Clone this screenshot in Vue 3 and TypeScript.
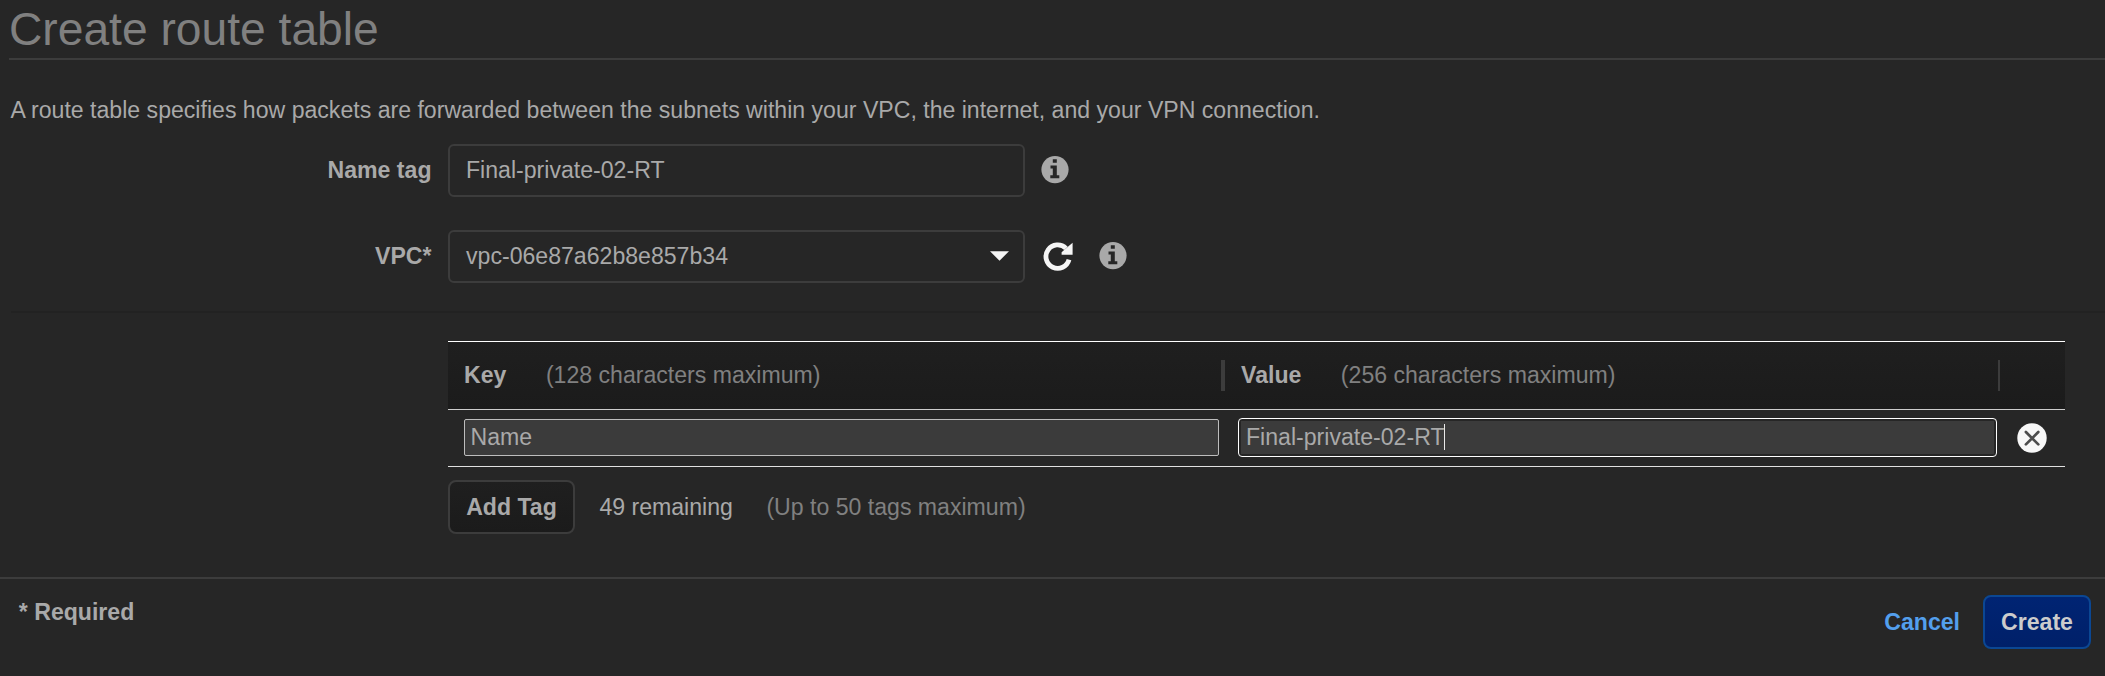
<script setup lang="ts">
import { ref } from 'vue'

interface Tag {
  key: string
  value: string
}

const MAX_TAGS = 50
const nameTag = ref('Final-private-02-RT')
const vpcId = ref('vpc-06e87a62b8e857b34')
const tags = ref<Tag[]>([{ key: 'Name', value: 'Final-private-02-RT' }])

function addTag(): void {
  if (tags.value.length < MAX_TAGS) tags.value.push({ key: '', value: '' })
}
function removeTag(index: number): void {
  tags.value.splice(index, 1)
}
</script>

<template>
  <main class="page">
    <h1 class="title">Create route table</h1>
    <p class="description">
      A route table specifies how packets are forwarded between the subnets within your VPC, the internet, and your VPN connection.
    </p>

    <div class="row">
      <label class="label">Name tag</label>
      <input v-model="nameTag" class="field" type="text" spellcheck="false" />
      <svg class="info first" viewBox="0 0 28 28">
        <circle cx="14" cy="13.6" r="13.6" fill="#a9a9a9" />
        <path d="M11.8 3.2h4v3.6h-4zM9.5 9.6h6.3v9.6h2.5v3H9.3v-3h2.5v-6.6H9.5z" fill="#262626" />
      </svg>
    </div>

    <div class="row vpc">
      <label class="label">VPC*</label>
      <button class="field select" type="button">
        <span>{{ vpcId }}</span>
        <svg class="arrow" viewBox="0 0 20 10"><path d="M0 0h20L10 10z" fill="#f5f5f5" /></svg>
      </button>
      <svg class="refresh" viewBox="0 0 30 30">
        <path d="M26 17.6A11.7 11.7 0 1 1 23 6.4" fill="none" stroke="#f5f5f5" stroke-width="4.8" />
        <path d="M29.6 .8v12H18.6v-2.6l4-3.4 2.6-2.2z" fill="#f5f5f5" />
      </svg>
      <svg class="info second" viewBox="0 0 28 28">
        <circle cx="14" cy="13.6" r="13.6" fill="#a9a9a9" />
        <path d="M11.8 3.2h4v3.6h-4zM9.5 9.6h6.3v9.6h2.5v3H9.3v-3h2.5v-6.6H9.5z" fill="#262626" />
      </svg>
    </div>

    <div class="divider"></div>

    <section class="tags">
      <header class="head">
        <div class="cell key"><b>Key</b><span class="hint">(128 characters maximum)</span></div>
        <div class="cell value"><b>Value</b><span class="hint">(256 characters maximum)</span></div>
        <div class="cell tail"></div>
      </header>
      <div v-for="(tag, i) in tags" :key="i" class="tag">
        <input v-model="tag.key" class="key-input" type="text" spellcheck="false" />
        <div class="focused">
          <div class="value-input"><span>{{ tag.value }}</span><i class="caret"></i></div>
        </div>
        <svg class="remove" viewBox="0 0 30 30" @click="removeTag(i)">
          <circle cx="15" cy="15" r="14.7" fill="#f7f7f7" />
          <path d="M8.9 9l12.4 12.4M21.3 9L8.9 21.4" stroke="#4c4c4c" stroke-width="2.7" stroke-linecap="round" />
        </svg>
      </div>
    </section>

    <div class="add-row">
      <button class="btn add" type="button" @click="addTag">Add Tag</button>
      <span class="remaining">{{ MAX_TAGS - tags.length }} remaining</span>
      <span class="limit">(Up to 50 tags maximum)</span>
    </div>

    <footer class="footer">
      <b class="required">* Required</b>
      <a class="cancel">Cancel</a>
      <button class="btn create" type="button">Create</button>
    </footer>
  </main>
</template>

<style>
body {
  background: #262626;
}
</style>

<style scoped>
.page {
  box-sizing: border-box;
  width: 2105px;
  height: 676px;
  overflow: hidden;
  background: #262626;
  color: #a9a9a9;
  font: 23.1px/26px "Liberation Sans", Arial, sans-serif;
}
.page * {
  box-sizing: border-box;
}
.title {
  height: 60px;
  margin: 0 0 0 9px;
  padding-top: 3px;
  border-bottom: 2px solid #3c3c3c;
  color: #808080;
  font-size: 46.2px;
  font-weight: 400;
  line-height: 52px;
}
.description {
  margin: 37px 0 21px 10.5px;
  white-space: nowrap;
}
.row {
  display: flex;
  height: 53px;
}
.vpc {
  margin-top: 33px;
}
.label {
  width: 448px;
  padding: 13px 16.5px 0 0;
  font-weight: 700;
  text-align: right;
}
.field {
  width: 577px;
  height: 53px;
  margin: 0;
  padding: 11px 14px 12px 16px;
  border: 2px solid #3c3c3c;
  border-radius: 6px;
  outline: none;
  background: #262626;
  color: #a9a9a9;
  font: inherit;
  text-align: left;
}
.select {
  display: flex;
  justify-content: space-between;
}
.arrow {
  width: 19px;
  height: 10px;
  margin-top: 8px;
}
.info {
  width: 28px;
  height: 28px;
}
.first {
  margin: 12px 0 0 16px;
}
.second {
  margin: 12px 0 0 26px;
}
.refresh {
  width: 30px;
  height: 30px;
  margin: 12px 0 0 18px;
}
.divider {
  height: 2px;
  margin: 28px 0 28px 11px;
  background: #222222;
}
.tags {
  width: 1617px;
  margin-left: 448px;
  border-top: 1px solid #ffffff;
}
.head {
  display: flex;
  height: 68px;
  padding-top: 18px;
  border-bottom: 1px solid #cccccc;
  background: linear-gradient(#1f1f1f, #1b1b1b);
}
.cell {
  display: flex;
  height: 31px;
  padding-top: 2px;
}
.key {
  width: 777px;
  padding-left: 16px;
  border-right: 4px solid #3c3c3c;
}
.value {
  width: 775px;
  padding-left: 16px;
  border-right: 2px solid #3c3c3c;
}
.hint {
  margin-left: 39.5px;
  color: #808080;
}
.tag {
  display: flex;
  height: 57px;
  border-bottom: 1px solid #e0e0e0;
}
.key-input {
  width: 755px;
  height: 37px;
  margin: 9px 0 0 16px;
  padding: 4px 5px 5px 5.5px;
  border: 1px solid #bdbdbd;
  border-radius: 2px;
  outline: none;
  background: #3b3b3b;
  color: #a9a9a9;
  font: inherit;
}
.focused {
  width: 759px;
  height: 39px;
  margin: 8px 0 0 19px;
  padding: 2px;
  border: 1px solid #ffffff;
  border-radius: 4px;
}
.value-input {
  display: flex;
  height: 33px;
  padding: 3px 5px;
  background: #3b3b3b;
}
.caret {
  width: 1px;
  height: 26px;
  margin-left: -1px;
  background: #e8e8e8;
}
.remove {
  width: 30px;
  height: 30px;
  margin: 13px 0 0 20px;
}
.add-row {
  display: flex;
  margin: 13px 0 0 448px;
}
.btn {
  height: 54px;
  margin: 0;
  padding: 0 0 1px;
  border: 2px solid #3c3c3c;
  border-radius: 8px;
  font: inherit;
  font-weight: 700;
  text-align: center;
}
.add {
  width: 127px;
  background: linear-gradient(#1f1f1f, #1b1b1b);
  color: #a9a9a9;
}
.remaining {
  width: 167px;
  margin: 14px 0 0 24.4px;
}
.limit {
  margin-top: 14px;
  color: #808080;
}
.footer {
  display: flex;
  height: 99px;
  margin-top: 43px;
  padding: 16px 14px 0 18.8px;
  border-top: 2px solid #3c3c3c;
}
.required {
  margin-top: 4px;
}
.cancel {
  margin: 14px 23px 0 auto;
  color: #539fed;
  font-weight: 700;
}
.create {
  width: 108px;
  border-color: #0b4793;
  background: linear-gradient(#002473, #002069);
  color: #cccccc;
}
</style>
